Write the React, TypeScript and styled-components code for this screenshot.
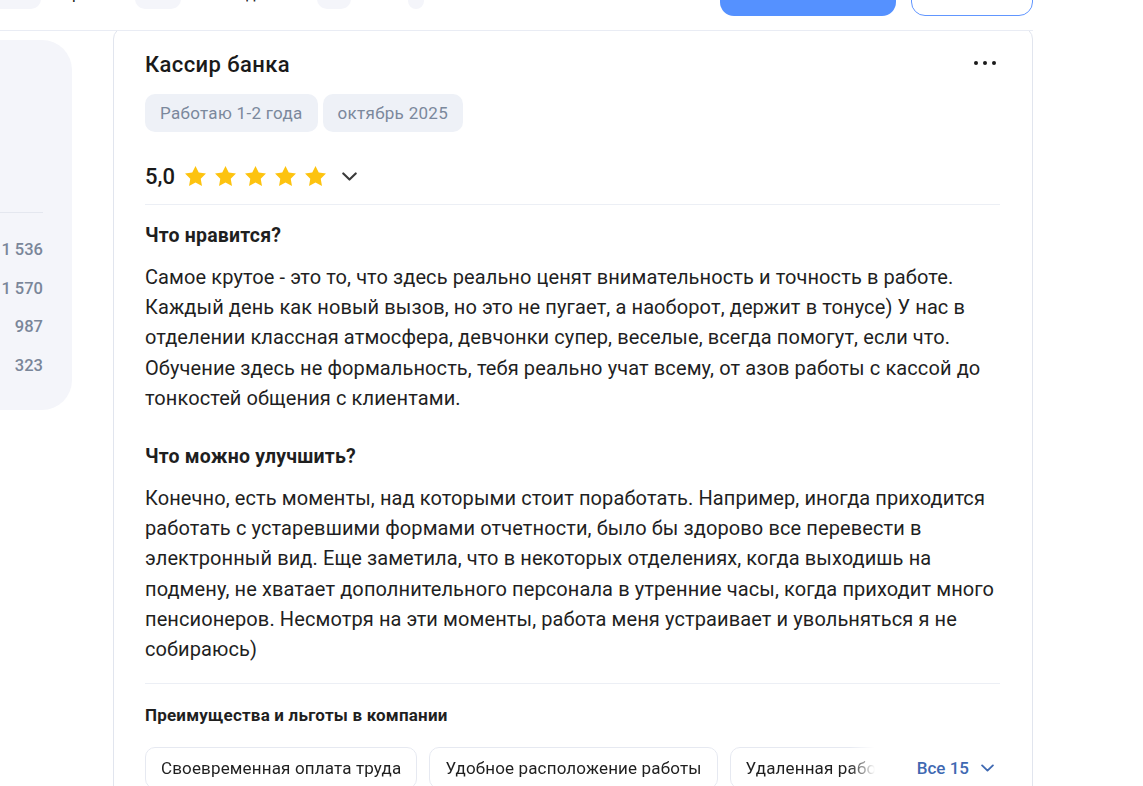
import React from "react";
import styled, { createGlobalStyle } from "styled-components";

const GlobalStyle = createGlobalStyle`
  html, body { margin: 0; padding: 0; background: #ffffff; }
  body {
    font-family: Roboto, "Noto Sans", Arial, sans-serif;
    color: #1f1f1f;
    overflow: hidden;
  }
  * { box-sizing: border-box; }
`;

const Page = styled.div`
  width: 1033px;
`;

const Header = styled.header`
  position: relative;
  z-index: 2;
  height: 31px;
  background: #ffffff;
  border-bottom: 1px solid #e9ecf4;
`;

const HeaderRow = styled.div`
  display: flex;
  align-items: flex-end;
  height: 16px;
`;

const TopPill = styled.div<{ $w: number; $ml: number }>`
  width: ${(p) => p.$w}px;
  height: 36px;
  margin-left: ${(p) => p.$ml}px;
  margin-bottom: 7px;
  border-radius: 10px;
  background: #f4f5fa;
  flex: none;
`;

const TopLabel = styled.span<{ $w: number; $ml: number }>`
  width: ${(p) => p.$w}px;
  margin-left: ${(p) => p.$ml}px;
  margin-bottom: 12px;
  font-size: 16px;
  line-height: 20px;
  color: #1a1a1a;
  white-space: nowrap;
  overflow: hidden;
  flex: none;
`;

const PrimaryButton = styled.button<{ $ml: number }>`
  margin-left: ${(p) => p.$ml}px;
  width: 176px;
  height: 48px;
  border: none;
  border-radius: 14px;
  background: #5591ff;
  flex: none;
`;

const OutlineButton = styled.button<{ $ml: number }>`
  margin-left: ${(p) => p.$ml}px;
  width: 122px;
  height: 48px;
  border: 1.5px solid #6196ff;
  border-radius: 14px;
  background: #ffffff;
  flex: none;
`;

const Content = styled.div`
  display: flex;
  align-items: flex-start;
  gap: 41px;
  margin-top: -4px;
`;

const SidePanel = styled.aside`
  width: 72px;
  margin-top: 13px;
  height: 370px;
  background: #f4f5fa;
  border-radius: 0 30px 30px 0;
  padding: 172px 29px 0 0;
  flex: none;
`;

const SideList = styled.div`
  border-top: 1px solid #e4e7ef;
  padding-top: 18px;
  display: flex;
  flex-direction: column;
`;

const SideRow = styled.div`
  height: 38.5px;
  line-height: 38.5px;
  text-align: right;
  font-size: 16.5px;
  font-weight: 500;
  color: #7a8699;
  white-space: nowrap;
`;

const Card = styled.article`
  width: 920px;
  border: 1px solid #e1e5ee;
  border-radius: 12px;
  padding: 23px 32px 32px 31px;
  background: #ffffff;
  flex: none;
`;

const CardHead = styled.div`
  display: flex;
  align-items: center;
  justify-content: space-between;
`;

const Title = styled.h2`
  margin: 0;
  font-size: 22px;
  line-height: 28px;
  letter-spacing: 0.4px;
  font-weight: 500;
  color: #1a1a1a;
`;

const DotsButton = styled.button`
  width: 28px;
  height: 28px;
  margin: -5px 1px 0 0;
  padding: 0;
  border: none;
  background: transparent;
  display: flex;
  align-items: center;
  justify-content: center;
  gap: 5px;
`;

const Dot = styled.span`
  width: 4px;
  height: 4px;
  border-radius: 50%;
  background: #1a1a1a;
`;

const TagRow = styled.div`
  display: flex;
  gap: 5px;
  margin-top: 15px;
`;

const Tag = styled.span`
  height: 38px;
  padding: 0 15px;
  display: inline-flex;
  align-items: center;
  border-radius: 10px;
  background: #eef1f7;
  color: #7b889c;
  font-size: 17px;
  letter-spacing: 0.3px;
`;

const RatingRow = styled.div`
  display: flex;
  align-items: center;
  height: 30px;
  margin-top: 29px;
`;

const Score = styled.span`
  font-size: 22px;
  font-weight: 500;
  color: #1a1a1a;
  margin-right: 10px;
`;

const Stars = styled.div`
  display: flex;
  gap: 9px;
`;

const ExpandButton = styled.button`
  margin-left: 16px;
  padding: 0;
  border: none;
  background: transparent;
  display: flex;
  align-items: center;
`;

const Divider = styled.hr<{ $mt: number }>`
  margin: ${(p) => p.$mt}px 0 0;
  border: none;
  border-top: 1px solid #eceff5;
`;

const SectionTitle = styled.h3<{ $mt: number }>`
  margin: ${(p) => p.$mt}px 0 0;
  font-size: 19.5px;
  line-height: 24px;
  letter-spacing: 0.2px;
  font-weight: 700;
  color: #1f1f1f;
`;

const Paragraph = styled.p`
  margin: 14px 0 0;
  font-size: 20px;
  line-height: 30.2px;
  letter-spacing: 0.1px;
  color: #1f1f1f;
`;

const BenefitsTitle = styled.h4`
  margin: 20px 0 0;
  font-size: 17px;
  line-height: 22px;
  letter-spacing: 0.2px;
  font-weight: 700;
  color: #1f1f1f;
`;

const BenefitsRow = styled.div`
  display: flex;
  align-items: center;
  margin-top: 21px;
`;

const ChipScroller = styled.div`
  flex: 1;
  display: flex;
  gap: 12px;
  overflow: hidden;
  -webkit-mask-image: linear-gradient(to right, #000 calc(100% - 48px), transparent calc(100% - 22px));
  mask-image: linear-gradient(to right, #000 calc(100% - 48px), transparent calc(100% - 22px));
`;

const BenefitChip = styled.span`
  flex: none;
  height: 42px;
  padding: 0 15px;
  display: inline-flex;
  align-items: center;
  border: 1px solid #e6e9f1;
  border-radius: 10px;
  font-size: 17px;
  letter-spacing: 0.15px;
  color: #1f1f1f;
  white-space: nowrap;
`;

const AllButton = styled.button`
  flex: none;
  margin: 0 6px 0 20px;
  padding: 0;
  border: none;
  background: transparent;
  display: flex;
  align-items: center;
  gap: 12px;
  font-family: inherit;
  font-size: 17px;
  font-weight: 500;
  color: #3f69b2;
`;

const Star = () => (
  <svg width="21" height="20" viewBox="2 2 20 19.1">
    <path
      d="M12 2l3.09 6.26L22 9.27l-5 4.87 1.18 6.88L12 17.77l-6.18 3.25L7 14.14 2 9.27l6.91-1.01L12 2z"
      fill="#fdc30f"
    />
  </svg>
);

const Chevron = ({ color, w, h }: { color: string; w: number; h: number }) => (
  <svg width={w} height={h} viewBox="0 0 14 8">
    <path d="M1.2 1.2L7 6.8l5.8-5.6" fill="none" stroke={color} strokeWidth="2" strokeLinecap="round" strokeLinejoin="round" />
  </svg>
);

export default function App() {
  return (
    <>
      <GlobalStyle />
      <Page>
        <Header>
          <HeaderRow>
            <TopPill $w={61} $ml={-20} />
            <TopLabel $w={55} $ml={31}>рейтинг</TopLabel>
            <TopPill $w={46} $ml={8} />
            <TopLabel $w={20} $ml={65}>до</TopLabel>
            <TopPill $w={34} $ml={51} />
            <TopPill $w={16} $ml={57} />
            <PrimaryButton $ml={296} />
            <OutlineButton $ml={15} />
          </HeaderRow>
        </Header>
        <Content>
          <SidePanel>
            <SideList>
              <SideRow>1 536</SideRow>
              <SideRow>1 570</SideRow>
              <SideRow>987</SideRow>
              <SideRow>323</SideRow>
            </SideList>
          </SidePanel>
          <Card>
            <CardHead>
              <Title>Кассир банка</Title>
              <DotsButton aria-label="Ещё">
                <Dot />
                <Dot />
                <Dot />
              </DotsButton>
            </CardHead>
            <TagRow>
              <Tag>Работаю 1-2 года</Tag>
              <Tag>октябрь 2025</Tag>
            </TagRow>
            <RatingRow>
              <Score>5,0</Score>
              <Stars>
                <Star />
                <Star />
                <Star />
                <Star />
                <Star />
              </Stars>
              <ExpandButton aria-label="Подробнее">
                <Chevron color="#3a3a3a" w={15} h={9} />
              </ExpandButton>
            </RatingRow>
            <Divider $mt={13} />
            <SectionTitle $mt={19}>Что нравится?</SectionTitle>
            <Paragraph>
              Самое крутое - это то, что здесь реально ценят внимательность и точность в работе. Каждый день как новый
              вызов, но это не пугает, а наоборот, держит в тонусе) У нас в отделении классная атмосфера, девчонки
              супер, веселые, всегда помогут, если что. Обучение здесь не формальность, тебя реально учат всему, от
              азов работы с кассой до тонкостей общения с клиентами.
            </Paragraph>
            <SectionTitle $mt={32}>Что можно улучшить?</SectionTitle>
            <Paragraph>
              Конечно, есть моменты, над которыми стоит поработать. Например, иногда приходится работать с
              устаревшими формами отчетности, было бы здорово все перевести в электронный вид. Еще заметила, что в
              некоторых отделениях, когда выходишь на подмену, не хватает дополнительного персонала в утренние часы,
              когда приходит много пенсионеров. Несмотря на эти моменты, работа меня устраивает и увольняться я не
              собираюсь)
            </Paragraph>
            <Divider $mt={19} />
            <BenefitsTitle>Преимущества и льготы в компании</BenefitsTitle>
            <BenefitsRow>
              <ChipScroller>
                <BenefitChip>Своевременная оплата труда</BenefitChip>
                <BenefitChip>Удобное расположение работы</BenefitChip>
                <BenefitChip>Удаленная работа</BenefitChip>
              </ChipScroller>
              <AllButton>
                Все 15
                <Chevron color="#3f69b2" w={13} h={8} />
              </AllButton>
            </BenefitsRow>
          </Card>
        </Content>
      </Page>
    </>
  );
}
